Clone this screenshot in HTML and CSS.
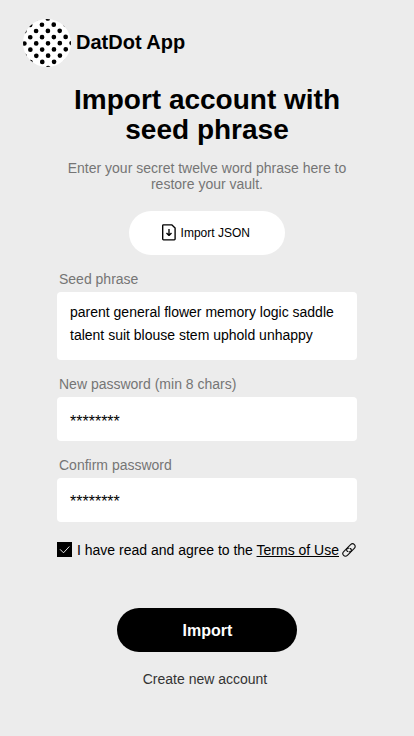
FILE: index.html
```html
<!DOCTYPE html>
<html lang="en">
<head>
<meta charset="utf-8">
<title>DatDot App</title>
<link rel="stylesheet" href="styles.css">
</head>
<body>
<header class="brand">
  <svg class="logo" viewBox="0 0 48 48">
    <defs>
      <clipPath id="disc"><circle cx="24" cy="24" r="24"/></clipPath>
    </defs>
    <circle cx="24" cy="24" r="24" fill="#fff"/>
    <g clip-path="url(#disc)">
      <path transform="translate(25 24.3) rotate(-.5)" fill="none" stroke="#000" stroke-width="4.700" stroke-linecap="round"
        d="M-11.800-24.800h.01M0-24.800h.01M11.800-24.800h.01
           M-17.700-18.600h.01M-5.900-18.600h.01M5.900-18.600h.01M17.700-18.600h.01
           M-11.800-12.400h.01M0-12.400h.01M11.800-12.400h.01
           M-17.700-6.200h.01M-5.900-6.200h.01M5.900-6.200h.01M17.700-6.200h.01
           M-23.600 0h.01M-11.800 0h.01M0 0h.01M11.800 0h.01M23.600 0h.01
           M-17.700 6.200h.01M-5.900 6.200h.01M5.900 6.200h.01M17.700 6.200h.01
           M-23.600 12.400h.01M-11.800 12.400h.01M0 12.400h.01M11.800 12.400h.01
           M-17.700 18.600h.01M-5.900 18.600h.01M5.900 18.600h.01M17.700 18.600h.01
           M0 24.800h.01M-23.600-12.400h.01"/>
    </g>
  </svg>
  <span class="brand-name">DatDot App</span>
</header>
<main class="content">
  <h1 class="title">Import account with<br>seed phrase</h1>
  <p class="intro">Enter your secret twelve word phrase here to<br>restore your vault.</p>
  <button class="json-button">
    <svg class="file-icon" viewBox="0 0 14 17" fill="none" stroke="#000" stroke-width="1.350" stroke-linejoin="round">
      <path d="M1.400.8h8.300l3.400 3.300V15q0 .8-.8.8H1.500q-.8 0-.8-.8V1.600q0-.8.700-.8z"/>
      <path d="M7 5v6.300M4.500 8.900 7 11.400l2.500-2.500"/>
    </svg>
    <span>Import JSON</span>
  </button>
  <form class="form">
    <label class="label">Seed phrase</label>
    <div class="field seed">parent general flower memory logic saddle<br>talent suit blouse stem uphold unhappy</div>
    <label class="label">New password (min 8 chars)</label>
    <div class="field secret">********</div>
    <label class="label">Confirm password</label>
    <div class="field secret confirm">********</div>
    <div class="terms">
      <svg class="check" viewBox="0 0 15 15"><path d="M0 0h15v15H0z"/><path d="m3 7.300 3.500 3.500 5.800-6.300" fill="none" stroke="#fff" stroke-width=".9"/></svg>
      <span class="terms-text">I have read and agree to the <a class="link">Terms of Use</a></span>
      <svg class="chain" viewBox="0 0 16 16" fill="none" stroke="#111" stroke-width="1.150" stroke-linecap="round">
        <path d="M6.500 9.500C5.200 8.200 5.500 6.800 6.600 5.700l3-3c1.200-1.200 2.700-1.200 3.800-.1s1.100 2.600-.1 3.800l-2.700 2.700c-.8.8-1.700 1-2.600.7"/>
        <path d="M9.500 6.500c1.300 1.300 1 2.700-.1 3.800l-3 3c-1.200 1.200-2.700 1.200-3.800.1s-1.100-2.600.1-3.800l2.700-2.700c.8-.8 1.700-1 2.600-.7"/>
      </svg>
    </div>
  </form>
  <button class="submit">Import</button>
  <a class="create">Create new account</a>
</main>
</body>
</html>
```
FILE: styles.css
```css
* { box-sizing: border-box; }
body {
  margin: 0;
  height: 736px;
  background: #ececec;
  color: #000;
  font-family: "Liberation Sans", Arial, sans-serif;
  font-size: 14px;
}
button { font-family: inherit; border: 0; color: #000; }
.brand { display: flex; align-items: center; gap: 5px; padding: 19px 0 0 23px; }
.logo { width: 48px; height: 48px; }
.brand-name { font-size: 20px; line-height: 24px; font-weight: 700; padding-bottom: 2px; }
.content { display: flex; flex-direction: column; align-items: center; }
.title { margin: 18px 0 0; font-size: 28px; line-height: 30px; text-align: center; }
.intro { margin: 15px 0 0; line-height: 16px; text-align: center; color: #757575; }
.json-button {
  display: flex; align-items: center; justify-content: center; gap: 4.5px;
  width: 156px; height: 44px; margin-top: 19px; padding: 0 2px 0 0;
  border-radius: 22px; background: #fff; font-size: 12px;
}
.file-icon { width: 14px; height: 17px; margin-bottom: 1px; }
.form { width: 300px; margin-top: 16px; }
.label { display: block; height: 21px; padding-left: 2px; line-height: 17px; color: #757575; }
.field { border-radius: 4px; background: #fff; padding: 0 13px; margin-bottom: 16px; }
.seed { height: 68px; padding-top: 9px; line-height: 23px; }
.secret { height: 44px; padding-top: 15px; font-size: 16px; line-height: 20px; }
.confirm { padding-top: 14px; margin-bottom: 0; }
.terms { display: flex; align-items: center; height: 16px; margin-top: 20px; white-space: nowrap; }
.check { width: 15px; height: 15px; margin: 0 5px 1px 0; align-self: flex-start; }
.terms-text { line-height: 16px; }
.link { text-decoration: underline; }
.chain { width: 16px; height: 16px; margin-left: 2px; }
.submit {
  width: 180px; height: 44px; margin-top: 50px; padding: 1px 0 0 1px;
  border-radius: 22px; background: #000; color: #fff; font-size: 16px; font-weight: 700;
}
.create { margin-top: 19px; padding-right: 4px; line-height: 16px; color: #333; }
```
